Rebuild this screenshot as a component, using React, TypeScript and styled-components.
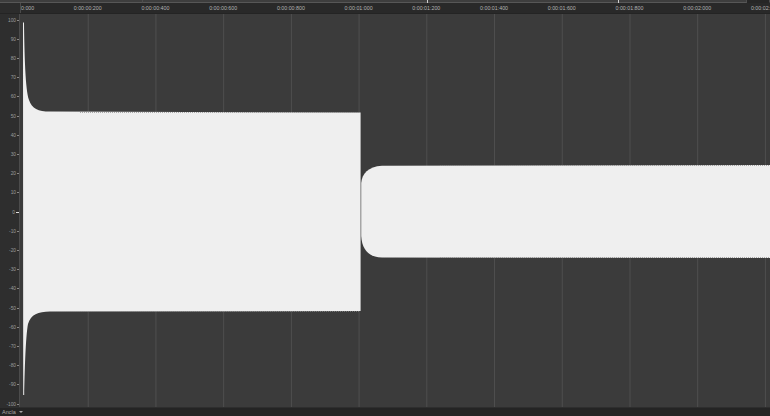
import React from "react";
import styled, { createGlobalStyle } from "styled-components";

///////////////////////
// CSS
///////////////////////
const GlobalStyle = createGlobalStyle`
  html, body {
    margin: 0;
    padding: 0;
    background: #2a2a2a;
    overflow: hidden;
  }
  * {
    box-sizing: border-box;
  }
`;

const Frame = styled.div`
  width: 770px;
  height: 416px;
  display: flex;
  flex-direction: column;
  font-family: "Liberation Sans", Arial, sans-serif;
  background: #3b3b3b;
`;

const TopStrip = styled.div`
  position: relative;
  height: 3px;
  display: flex;
  flex-shrink: 0;
`;

const StripPart = styled.div<{ $w?: number; $dark?: boolean }>`
  ${(p) => (p.$w ? `width: ${p.$w}px;` : "flex: 1;")}
  height: 100%;
  background: ${(p) => (p.$dark ? "#262626" : "#3e3e3e")};
  border-bottom: 1px solid ${(p) => (p.$dark ? "#262626" : "#575757")};
  border-right: 1px solid #4e4e4e;
`;

const StripMark = styled.div`
  position: absolute;
  top: 0;
  width: 1px;
  height: 3px;
  background: #d0d0d0;
`;

const Ruler = styled.div`
  height: 11px;
  display: flex;
  flex-shrink: 0;
  background: #292929;
  border-bottom: 1px solid #242424;
`;

const RulerCorner = styled.div`
  width: 20px;
  background: #2c2c2c;
`;

const RulerTrack = styled.div`
  position: relative;
  flex: 1;
  overflow: hidden;
  border-left: 1px solid #4a4a4a;
`;

const TimeLabel = styled.span<{ $first?: boolean }>`
  position: absolute;
  top: 2px;
  font-size: 5.3px;
  line-height: 6px;
  color: #b4b4b4;
  white-space: nowrap;
  transform: ${(p) => (p.$first ? "none" : "translateX(-50%)")};
`;

const Body = styled.div`
  flex: 1;
  display: flex;
  min-height: 0;
`;

const Axis = styled.div`
  position: relative;
  width: 20px;
  flex-shrink: 0;
  background: #2e2e2e;
  border-right: 1px solid #4c4c4c;
`;

const AxisTick = styled.div<{ $zero?: boolean }>`
  position: absolute;
  right: 0;
  height: 6px;
  display: flex;
  align-items: center;
  gap: 1px;
  transform: translateY(-50%);
  font-size: 4.8px;
  color: #9c9c9c;
  white-space: nowrap;

  &::after {
    content: "";
    width: ${(p) => (p.$zero ? "3px" : "2px")};
    height: 1px;
    background: ${(p) => (p.$zero ? "#e0e0e0" : "#8a8a8a")};
  }
`;

const Plot = styled.div`
  flex: 1;
  position: relative;
  background: #3b3b3b;
  overflow: hidden;
`;

const BottomBar = styled.div`
  height: 9px;
  flex-shrink: 0;
  display: flex;
  align-items: center;
  gap: 2px;
  padding-left: 2px;
  background: #242424;
  border-top: 1px solid #2e2e2e;
  font-size: 5.5px;
  color: #a8a8a8;
`;

const Caret = styled.span`
  width: 0;
  height: 0;
  border-left: 2px solid transparent;
  border-right: 2px solid transparent;
  border-top: 2px solid #a8a8a8;
  margin-left: 1px;
`;
///////////////////////
// end CSS
///////////////////////

const GRID = 67.72; // px per 200ms
const ZERO_Y = 198; // zero line inside the body
const UNIT = 1.92; // px per amplitude unit

const fmtTime = (ms: number) => {
  const s = Math.floor(ms / 1000);
  const rest = String(ms % 1000).padStart(3, "0");
  return `0:00:0${s}:${rest}`;
};

const ticks = Array.from({ length: 21 }, (_, i) => 100 - i * 10);
const times = Array.from({ length: 12 }, (_, i) => i * 200);

const Waveform = () => (
  <svg width={750} height={393} viewBox="0 0 750 393" style={{ display: "block" }}>
    {times.slice(1).map((t, i) => (
      <line
        key={t}
        x1={(i + 1) * GRID + 0.5}
        x2={(i + 1) * GRID + 0.5}
        y1={0}
        y2={393}
        stroke="#4f4f4f"
        strokeWidth={1}
      />
    ))}
    {/* first burst: decaying spike then steady ±50 */}
    <path
      d="M3,8 L4,9 C4.4,40 5.4,76 9,86 C12,95 18,97.3 30,97.6 L340.6,98.6 L340.6,297 L30,297.4 C18,297.8 11,300 8,310 C5.6,322 4.6,360 4.2,381 L3.2,381 Z"
      fill="#efefef"
    />
    {/* second burst: ±24 with a rounded attack */}
    <path
      d="M341.2,169 C342,160 348,152.5 362,151.8 L750,151 L750,244 L362,243.6 C348,243 342,235 341.2,222 Z"
      fill="#efefef"
    />
    <g stroke="#8c8c8c" strokeWidth={1} strokeDasharray="1 1" opacity={0.7}>
      <line x1={60} x2={340} y1={98.5} y2={98.5} />
      <line x1={60} x2={340} y1={297.5} y2={297.5} />
      <line x1={420} x2={750} y1={151.5} y2={151.5} />
      <line x1={420} x2={750} y1={243.5} y2={243.5} />
    </g>
  </svg>
);

const App = () => {
  return (
    <>
      <GlobalStyle />
      <Frame>
        <TopStrip>
          <StripPart $w={143} />
          <StripPart />
          <StripPart $w={23} $dark />
          <StripMark style={{ left: 427 }} />
          <StripMark style={{ left: 618 }} />
        </TopStrip>
        <Ruler>
          <RulerCorner />
          <RulerTrack>
            {times.map((t, i) =>
              i === 0 ? (
                <TimeLabel key={t} $first style={{ left: 0 }}>
                  0:000
                </TimeLabel>
              ) : (
                <TimeLabel key={t} style={{ left: i * GRID - 1 }}>
                  {fmtTime(t)}
                </TimeLabel>
              )
            )}
          </RulerTrack>
        </Ruler>
        <Body>
          <Axis>
            {ticks.map((v) => (
              <AxisTick key={v} $zero={v === 0} style={{ top: ZERO_Y - v * UNIT }}>
                {v}
              </AxisTick>
            ))}
          </Axis>
          <Plot>
            <Waveform />
          </Plot>
        </Body>
        <BottomBar>
          Ancla
          <Caret />
        </BottomBar>
      </Frame>
    </>
  );
};

export default App;
